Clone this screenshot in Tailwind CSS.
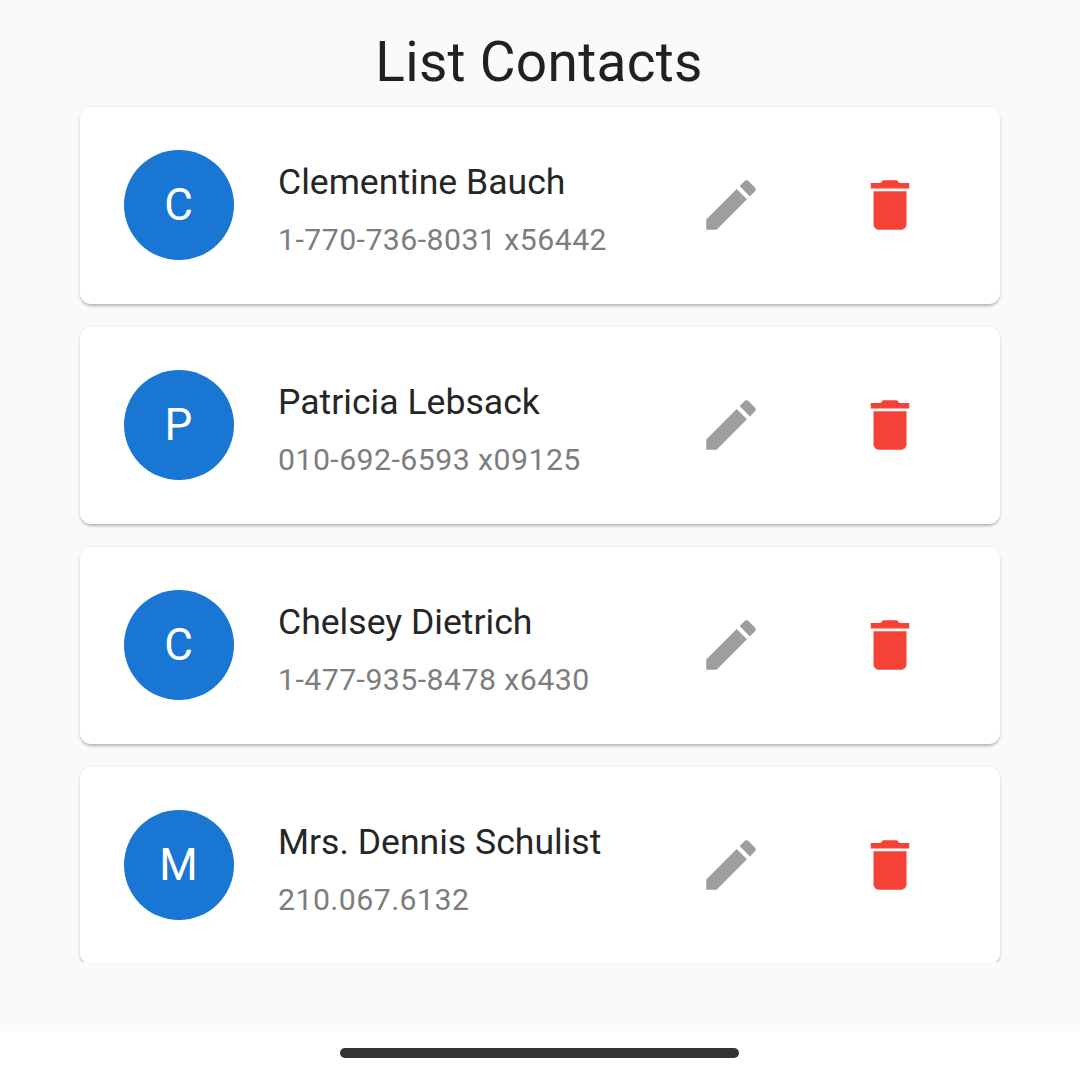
<!DOCTYPE html>
<html lang="en">
<head>
    <meta charset="UTF-8">
    <meta name="viewport" content="width=device-width, initial-scale=1.0">
    <title>List Contacts</title>
    <script src="https://cdn.jsdelivr.net/npm/@tailwindcss/browser@4"></script>
</head>
<body class="bg-white font-['Roboto',sans-serif]">
    <div class="h-[1075px] w-[1080px] flex flex-col overflow-hidden">
        <main class="h-[1031px] bg-[#fafafa] flex flex-col">
            <h1 class="h-[96px] pt-[29px] pr-[2px] text-center text-[55px] leading-[66px] tracking-[0.28px] text-[#212121]">List Contacts</h1>
            <div class="h-[866px] overflow-hidden px-[80px] pt-[11px] flex flex-col gap-[23px]">

                <div class="shrink-0 h-[197px] bg-white rounded-[11px] shadow-[0_3px_3px_-1px_rgba(0,0,0,0.22),0_1px_4px_rgba(0,0,0,0.1)] flex items-center pl-[44px] pb-[1px]">
                    <div class="w-[110px] h-[110px] rounded-full bg-[#1976d2] text-white text-[44px] pr-[1px] flex items-center justify-center shrink-0">C</div>
                    <div class="w-[383px] ml-[44px] pt-[10px] shrink-0 mr-[37px]">
                        <div class="text-[35.6px] leading-[44px] text-[#262626]">Clementine Bauch</div>
                        <div class="text-[30.25px] leading-[40px] mt-[16px] tracking-[0.45px] text-[#7d7d7d]">1-770-736-8031 x56442</div>
                    </div>
                    <svg class="w-[66px] h-[66px] shrink-0 fill-[#9e9e9e]" viewBox="0 0 24 24"><path d="M3 17.25V21h3.75L17.81 9.94l-3.75-3.75L3 17.25zM20.71 7.04c.39-.39.39-1.02 0-1.41l-2.34-2.34c-.39-.39-1.02-.39-1.41 0l-1.83 1.83 3.75 3.75 1.83-1.83z"/></svg>
                    <svg class="w-[66px] h-[66px] ml-[93px] shrink-0 fill-[#f44336]" viewBox="0 0 24 24"><path d="M6 19c0 1.1.9 2 2 2h8c1.1 0 2-.9 2-2V7H6v12zM19 4h-3.5l-1-1h-5l-1 1H5v2h14V4z"/></svg>
                </div>

                <div class="shrink-0 h-[197px] bg-white rounded-[11px] shadow-[0_3px_3px_-1px_rgba(0,0,0,0.22),0_1px_4px_rgba(0,0,0,0.1)] flex items-center pl-[44px] pb-[1px]">
                    <div class="w-[110px] h-[110px] rounded-full bg-[#1976d2] text-white text-[44px] pr-[1px] flex items-center justify-center shrink-0">P</div>
                    <div class="w-[383px] ml-[44px] pt-[10px] shrink-0 mr-[37px]">
                        <div class="text-[35.6px] leading-[44px] text-[#262626]">Patricia Lebsack</div>
                        <div class="text-[30.25px] leading-[40px] mt-[16px] tracking-[0.45px] text-[#7d7d7d]">010-692-6593 x09125</div>
                    </div>
                    <svg class="w-[66px] h-[66px] shrink-0 fill-[#9e9e9e]" viewBox="0 0 24 24"><path d="M3 17.25V21h3.75L17.81 9.94l-3.75-3.75L3 17.25zM20.71 7.04c.39-.39.39-1.02 0-1.41l-2.34-2.34c-.39-.39-1.02-.39-1.41 0l-1.83 1.83 3.75 3.75 1.83-1.83z"/></svg>
                    <svg class="w-[66px] h-[66px] ml-[93px] shrink-0 fill-[#f44336]" viewBox="0 0 24 24"><path d="M6 19c0 1.1.9 2 2 2h8c1.1 0 2-.9 2-2V7H6v12zM19 4h-3.5l-1-1h-5l-1 1H5v2h14V4z"/></svg>
                </div>

                <div class="shrink-0 h-[197px] bg-white rounded-[11px] shadow-[0_3px_3px_-1px_rgba(0,0,0,0.22),0_1px_4px_rgba(0,0,0,0.1)] flex items-center pl-[44px] pb-[1px]">
                    <div class="w-[110px] h-[110px] rounded-full bg-[#1976d2] text-white text-[44px] pr-[1px] flex items-center justify-center shrink-0">C</div>
                    <div class="w-[383px] ml-[44px] pt-[10px] shrink-0 mr-[37px]">
                        <div class="text-[35.6px] leading-[44px] text-[#262626]">Chelsey Dietrich</div>
                        <div class="text-[30.25px] leading-[40px] mt-[16px] tracking-[0.45px] text-[#7d7d7d]">1-477-935-8478 x6430</div>
                    </div>
                    <svg class="w-[66px] h-[66px] shrink-0 fill-[#9e9e9e]" viewBox="0 0 24 24"><path d="M3 17.25V21h3.75L17.81 9.94l-3.75-3.75L3 17.25zM20.71 7.04c.39-.39.39-1.02 0-1.41l-2.34-2.34c-.39-.39-1.02-.39-1.41 0l-1.83 1.83 3.75 3.75 1.83-1.83z"/></svg>
                    <svg class="w-[66px] h-[66px] ml-[93px] shrink-0 fill-[#f44336]" viewBox="0 0 24 24"><path d="M6 19c0 1.1.9 2 2 2h8c1.1 0 2-.9 2-2V7H6v12zM19 4h-3.5l-1-1h-5l-1 1H5v2h14V4z"/></svg>
                </div>

                <div class="shrink-0 h-[197px] bg-white rounded-[11px] shadow-[0_3px_3px_-1px_rgba(0,0,0,0.22),0_1px_4px_rgba(0,0,0,0.1)] flex items-center pl-[44px] pb-[1px]">
                    <div class="w-[110px] h-[110px] rounded-full bg-[#1976d2] text-white text-[44px] pr-[1px] flex items-center justify-center shrink-0">M</div>
                    <div class="w-[383px] ml-[44px] pt-[10px] shrink-0 mr-[37px]">
                        <div class="text-[35.6px] leading-[44px] text-[#262626]">Mrs. Dennis Schulist</div>
                        <div class="text-[30.25px] leading-[40px] mt-[16px] tracking-[0.45px] text-[#7d7d7d]">210.067.6132</div>
                    </div>
                    <svg class="w-[66px] h-[66px] shrink-0 fill-[#9e9e9e]" viewBox="0 0 24 24"><path d="M3 17.25V21h3.75L17.81 9.94l-3.75-3.75L3 17.25zM20.71 7.04c.39-.39.39-1.02 0-1.41l-2.34-2.34c-.39-.39-1.02-.39-1.41 0l-1.83 1.83 3.75 3.75 1.83-1.83z"/></svg>
                    <svg class="w-[66px] h-[66px] ml-[93px] shrink-0 fill-[#f44336]" viewBox="0 0 24 24"><path d="M6 19c0 1.1.9 2 2 2h8c1.1 0 2-.9 2-2V7H6v12zM19 4h-3.5l-1-1h-5l-1 1H5v2h14V4z"/></svg>
                </div>

            </div>
            <div class="flex-1"></div>
        </main>
        <div class="flex-1 bg-white flex justify-center pt-[17px] pr-[2px]">
            <div class="w-[399px] h-[10px] rounded-full bg-[#333333]"></div>
        </div>
    </div>
</body>
</html>
